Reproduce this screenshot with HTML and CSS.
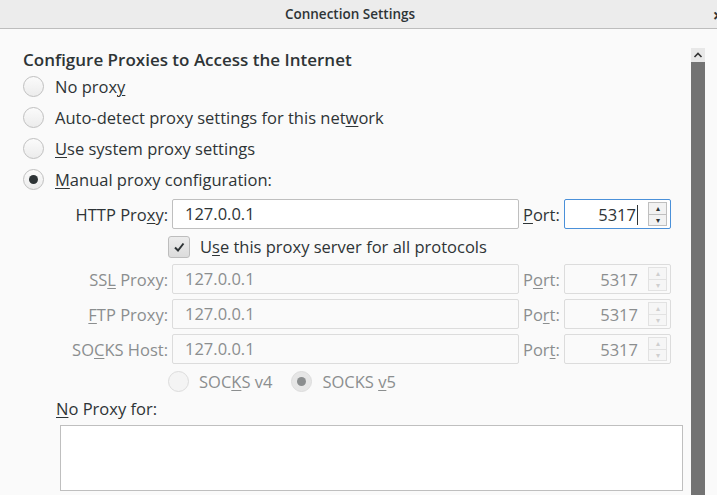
FILE: index.html
```html
<!DOCTYPE html>
<html>
<head>
<meta charset="utf-8">
<link rel="stylesheet" href="styles.css">
</head>
<body>
<div class="window">
  <div class="titlebar">
    <span class="title">Connection Settings</span>
    <span class="close">×</span>
  </div>
  <div class="main">
    <div class="content">
      <div class="heading">Configure Proxies to Access the Internet</div>
      <div class="radio-row"><span class="radio"></span><span class="lbl">No prox<u>y</u></span></div>
      <div class="radio-row"><span class="radio"></span><span class="lbl">Auto-detect proxy settings for this net<u>w</u>ork</span></div>
      <div class="radio-row"><span class="radio"></span><span class="lbl"><u>U</u>se system proxy settings</span></div>
      <div class="radio-row"><span class="radio checked"></span><span class="lbl"><u>M</u>anual proxy configuration:</span></div>

      <div class="proxy-grid">
        <div class="plabel">HTTP Pro<u>x</u>y:</div>
        <div class="input">127.0.0.1</div>
        <div class="portlabel"><u>P</u>ort:</div>
        <div class="port focus"><span class="pval">5317<span class="caret"></span></span><span class="spin"><span class="sb">▴</span><span class="sb">▾</span></span></div>

        <div class="check-row"><span class="checkbox"><svg width="14" height="14" viewBox="0 0 14 14"><path d="M3 7.5 L6 10.5 L11.5 3.5" fill="none" stroke="#2e3436" stroke-width="2"/></svg></span><span class="lbl">U<u>s</u>e this proxy server for all protocols</span></div>

        <div class="plabel dis">SS<u>L</u> Proxy:</div>
        <div class="input dis">127.0.0.1</div>
        <div class="portlabel dis">P<u>o</u>rt:</div>
        <div class="port dis"><span class="pval">5317</span><span class="spin"><span class="sb">▴</span><span class="sb">▾</span></span></div>

        <div class="plabel dis"><u>F</u>TP Proxy:</div>
        <div class="input dis">127.0.0.1</div>
        <div class="portlabel dis">Po<u>r</u>t:</div>
        <div class="port dis"><span class="pval">5317</span><span class="spin"><span class="sb">▴</span><span class="sb">▾</span></span></div>

        <div class="plabel dis">SO<u>C</u>KS Host:</div>
        <div class="input dis">127.0.0.1</div>
        <div class="portlabel dis">Por<u>t</u>:</div>
        <div class="port dis"><span class="pval">5317</span><span class="spin"><span class="sb">▴</span><span class="sb">▾</span></span></div>
      </div>

      <div class="socks-row">
        <span class="radio dis"></span><span class="lbl dis">SOC<u>K</u>S v4</span>
        <span class="radio dis checked-dis"></span><span class="lbl dis">SOCKS <u>v</u>5</span>
      </div>

      <div class="noproxy"><u>N</u>o Proxy for:</div>
      <div class="textarea"></div>
    </div>
    <div class="scrollbar">
      <div class="sbtn"><svg width="10" height="6" viewBox="0 0 10 6"><path d="M1.5 5 L5 1.5 L8.5 5" fill="none" stroke="#333" stroke-width="1.6"/></svg></div>
      <div class="thumb"></div>
    </div>
  </div>
</div>
</body>
</html>
```
FILE: styles.css
```css
* { box-sizing: border-box; }
html, body { margin: 0; padding: 0; }
body {
  width: 717px;
  height: 495px;
  overflow: hidden;
  background: #fafafa;
  font-family: "Open Sans", "Noto Sans", sans-serif;
  color: #2e3436;
}
u { text-decoration: underline; text-underline-offset: 2px; text-decoration-thickness: 1px; }
.window { display: flex; flex-direction: column; height: 495px; }
.titlebar {
  height: 29px;
  flex: none;
  background: #ececec;
  border-bottom: 1px solid #bdbdbd;
  display: flex;
  align-items: center;
  justify-content: center;
  position: relative;
}
.title { font-size: 13.5px; font-weight: 600; color: #2e3436; margin-left: -17px; }
.close {
  position: absolute;
  right: -6px;
  top: 3px;
  font-size: 18px;
  font-weight: 700;
  color: #2e3436;
}
.main { flex: 1; display: flex; }
.content { width: 691px; padding: 20px 0 0 23px; }
.heading { font-size: 17px; font-weight: 600; height: 22px; line-height: 22px; }
.radio-row { height: 31px; display: flex; align-items: center; }
.radio {
  width: 21px; height: 21px; border-radius: 50%;
  border: 1px solid #c0c0c0;
  background: linear-gradient(#fbfbfb, #ececec);
  flex: none;
  position: relative;
}
.radio.checked::after {
  content: ""; position: absolute; left: 5px; top: 5px; width: 9px; height: 9px; border-radius: 50%; background: #2e3436;
}
.radio.dis { border-color: #dcdcdc; background: #f4f4f4; }
.radio.checked-dis { background: #e6e6e6; }
.radio.checked-dis::after {
  content: ""; position: absolute; left: 5px; top: 5px; width: 9px; height: 9px; border-radius: 50%; background: #8b8e8f;
}
.lbl { font-size: 16.5px; margin-left: 11px; white-space: nowrap; }
.dis { color: #8b8e8f; }

.proxy-grid {
  display: grid;
  grid-template-columns: 145px 347px 37px 107px;
  grid-template-rows: 30px 25px 30px 30px 30px;
  column-gap: 4px;
  row-gap: 5px;
  margin-top: 4px;
  align-items: center;
}
.plabel { text-align: right; font-size: 16.5px; white-space: nowrap; }
.input {
  height: 30px; border: 1px solid #bfbfbf; background: #fff; border-radius: 2px;
  font-size: 16.5px; line-height: 28px; padding-left: 12px; color: #2e3436;
}
.input.dis { border-color: #dcdcdc; background: #fafafa; color: #8b8e8f; }
.portlabel { font-size: 16.5px; }
.port {
  height: 30px; border: 1px solid #bfbfbf; background: #fff; border-radius: 2px;
  display: flex; align-items: center; font-size: 16.5px;
}
.port.focus { border-color: #4a90d9; }
.port.dis { border-color: #dcdcdc; background: #fafafa; color: #8b8e8f; }
.pval { flex: 1; text-align: right; padding-right: 10px; position: relative; }
.caret { display: inline-block; width: 1px; height: 20px; background: #2e3436; vertical-align: -4px; margin-left: 1px; }
.spin { width: 19px; height: 24px; display: flex; flex-direction: column; margin-right: 3px; }
.sb {
  flex: 1; border: 1px solid #bfbfbf; background: #f2f2f2; font-size: 8px; line-height: 10px;
  text-align: center; color: #2e3436;
}
.sb + .sb { border-top: none; }
.port.dis .sb { border-color: #e2e2e2; background: #f6f6f6; color: #cfcfcf; }

.check-row { grid-column: 2 / 5; display: flex; align-items: center; height: 25px; margin-left: -4px; }
.checkbox {
  width: 22px; height: 22px; border: 1px solid #bdbdbd; border-radius: 3px;
  background: linear-gradient(#ececec, #dcdcdc);
  display: flex; align-items: center; justify-content: center; flex: none;
}
.check-row .lbl { margin-left: 10px; }

.socks-row { display: flex; align-items: center; height: 32px; margin-left: 145px; margin-top: 1px; }
.socks-row .lbl { margin-left: 10px; margin-right: 19px; }
.noproxy { font-size: 16.5px; margin-left: 33px; height: 24px; line-height: 24px; }
.textarea {
  margin-left: 37px; margin-top: 4px; width: 623px; height: 66px;
  border: 1px solid #bfbfbf; background: #fff;
}
.scrollbar { width: 14px; margin-top: 19px; display: flex; flex-direction: column; }
.sbtn { height: 14px; background: #e8e8e8; display: flex; align-items: center; justify-content: center; }
.thumb { flex: 1; background: #737373; }
```
